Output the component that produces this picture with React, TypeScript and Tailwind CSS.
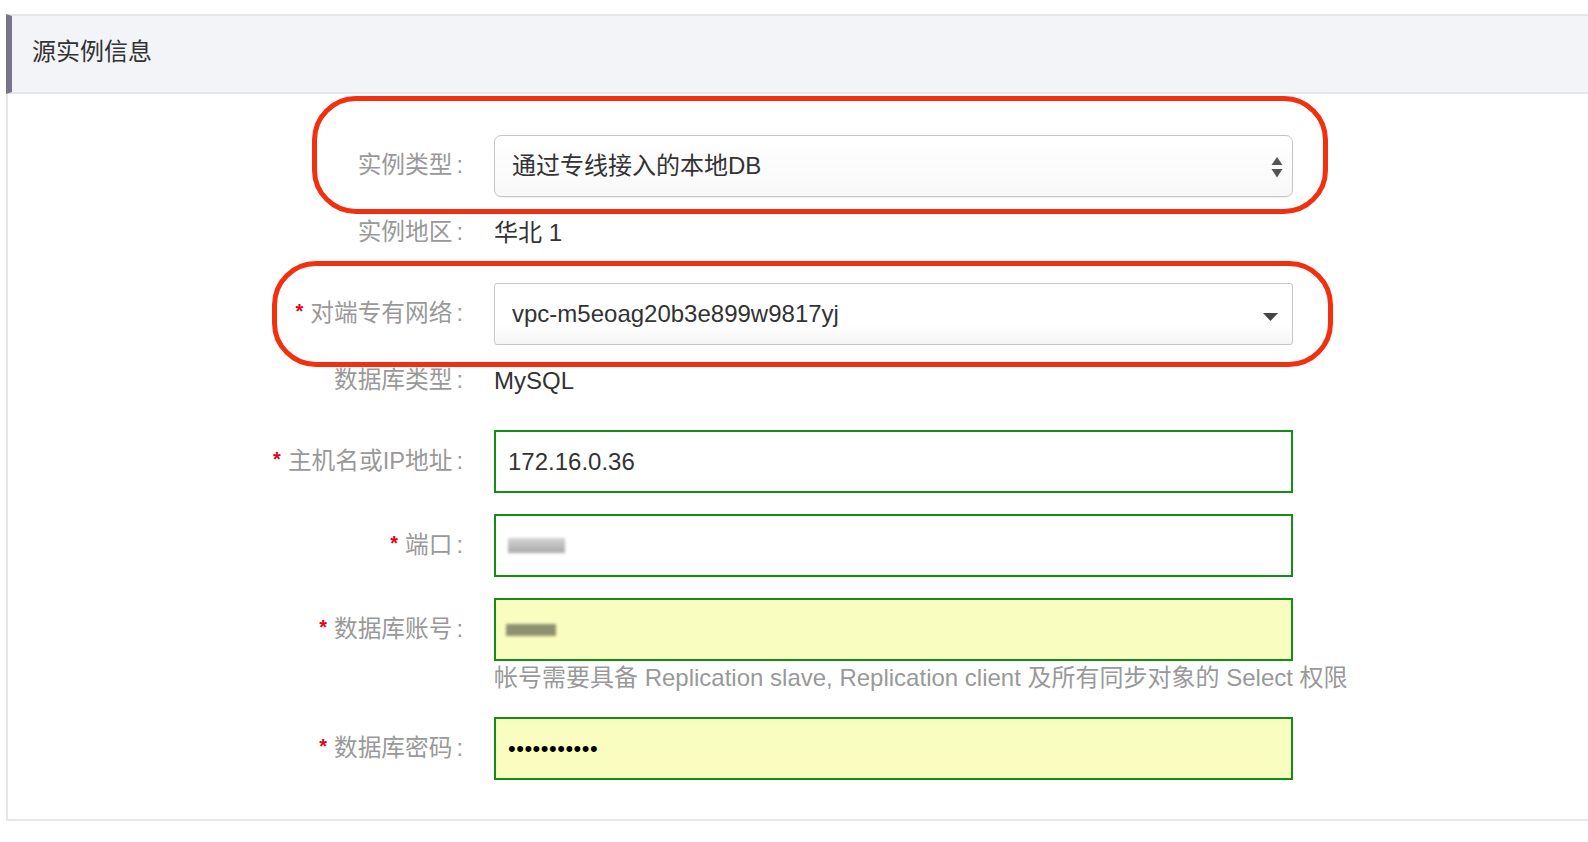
import React from "react";

const FONT = "font-['Liberation_Sans','Noto_Sans_CJK_SC',sans-serif]";

function Label({ text, required }: { text: string; required?: boolean }) {
  return (
    <div className="w-[457px] shrink-0 flex items-center justify-end pr-[2px] text-[23.7px] text-[#999]">
      {required && <span className="text-[#e60012] text-[20px] font-bold mr-[7px] -mt-[5px]">*</span>}
      <span>{text}</span>
      <span className="ml-[4px]">:</span>
    </div>
  );
}

function UpDown() {
  return (
    <svg width="12" height="21" viewBox="0 0 12 21" className="absolute right-[9px] top-[21px]">
      <path d="M6 0 L11.5 8 L0.5 8 Z" fill="#555" />
      <path d="M0.5 12 L11.5 12 L6 20.5 Z" fill="#555" />
    </svg>
  );
}

function Caret() {
  return (
    <svg width="15" height="8" viewBox="0 0 15 8" className="absolute right-[14px] top-[29px]">
      <path d="M0 0 L15 0 L7.5 8 Z" fill="#444" />
    </svg>
  );
}

function GreenInput({ yellow, children }: { yellow?: boolean; children?: React.ReactNode }) {
  return (
    <div
      className={`ml-[29px] w-[799px] h-[63px] border-2 border-[#138d13] flex items-center pl-[12px] text-[24px] text-[#333] ${
        yellow ? "bg-[#f9fdbf]" : "bg-white"
      }`}
    >
      {children}
    </div>
  );
}

export default function App() {
  return (
    <div className={`min-h-[842px] bg-white pt-[14px] pl-[6px] ${FONT}`}>
      {/* panel header */}
      <div className="h-[80px] flex items-center bg-[#f3f4f8] border-t-2 border-b-2 border-[#e3e6ea] border-l-[6px] border-l-[#787489] pl-[20px]">
        <span className="text-[24px] text-[#333] -mt-[4px]">源实例信息</span>
      </div>

      {/* panel body */}
      <div className="border-l-2 border-b-2 border-[#e3e6ea] pt-[41px] pb-[39px]">
        {/* 实例类型 */}
        <div className="relative flex items-center">
          <div className="absolute left-[304px] -top-[39px] w-[1016px] h-[118px] border-[5px] border-[#f2300f] rounded-[44px] pointer-events-none" />
          <Label text="实例类型" />
          <div className="relative ml-[29px] w-[799px] h-[62px] rounded-[7px] border border-[#c6c6c6] bg-gradient-to-b from-white to-[#f8f8f8] shadow-[0_1px_1px_rgba(0,0,0,0.06)] flex items-center pl-[17px] text-[24px] text-[#333]">
            通过专线接入的本地DB
            <UpDown />
          </div>
        </div>

        {/* 实例地区 */}
        <div className="flex items-center h-[30px] mt-[21px]">
          <Label text="实例地区" />
          <div className="ml-[29px] text-[24px] text-[#333]">华北 1</div>
        </div>

        {/* 对端专有网络 */}
        <div className="relative flex items-center mt-[35px]">
          <div className="absolute left-[264px] -top-[22px] w-[1061px] h-[106px] border-[5px] border-[#f2300f] rounded-[44px] pointer-events-none" />
          <Label text="对端专有网络" required />
          <div className="relative ml-[29px] w-[799px] h-[62px] rounded-[3px] border border-[#c8c8c8] bg-gradient-to-b from-white from-70% to-[#f5f5f5] flex items-center pl-[17px] text-[24px] text-[#333]">
            vpc-m5eoag20b3e899w9817yj
            <Caret />
          </div>
        </div>

        {/* 数据库类型 */}
        <div className="flex items-center h-[30px] mt-[21px]">
          <Label text="数据库类型" />
          <div className="ml-[29px] text-[24px] text-[#333]">MySQL</div>
        </div>

        {/* 主机名或IP地址 */}
        <div className="flex items-center mt-[34px]">
          <Label text="主机名或IP地址" required />
          <GreenInput>172.16.0.36</GreenInput>
        </div>

        {/* 端口 */}
        <div className="flex items-center mt-[21px]">
          <Label text="端口" required />
          <GreenInput>
            <div className="w-[57px] h-[15px] bg-gradient-to-b from-[#d4d4d4] to-[#a9a9a9] blur-[1.5px]" />
          </GreenInput>
        </div>

        {/* 数据库账号 */}
        <div className="flex items-center mt-[21px]">
          <Label text="数据库账号" required />
          <GreenInput yellow>
            <div className="w-[50px] h-[12px] -ml-[2px] bg-[#8e9170] blur-[1.5px]" />
          </GreenInput>
        </div>
        <div className="flex h-[30px] items-center mt-[2px]">
          <div className="w-[457px] shrink-0" />
          <div className="ml-[29px] text-[24px] text-[#999] whitespace-nowrap">
            帐号需要具备 Replication slave, Replication client 及所有同步对象的 Select 权限
          </div>
        </div>

        {/* 数据库密码 */}
        <div className="flex items-center mt-[24px]">
          <Label text="数据库密码" required />
          <GreenInput yellow>
            <span className="text-[22px] text-black tracking-[0.5px]">•••••••••••</span>
          </GreenInput>
        </div>
      </div>
    </div>
  );
}
